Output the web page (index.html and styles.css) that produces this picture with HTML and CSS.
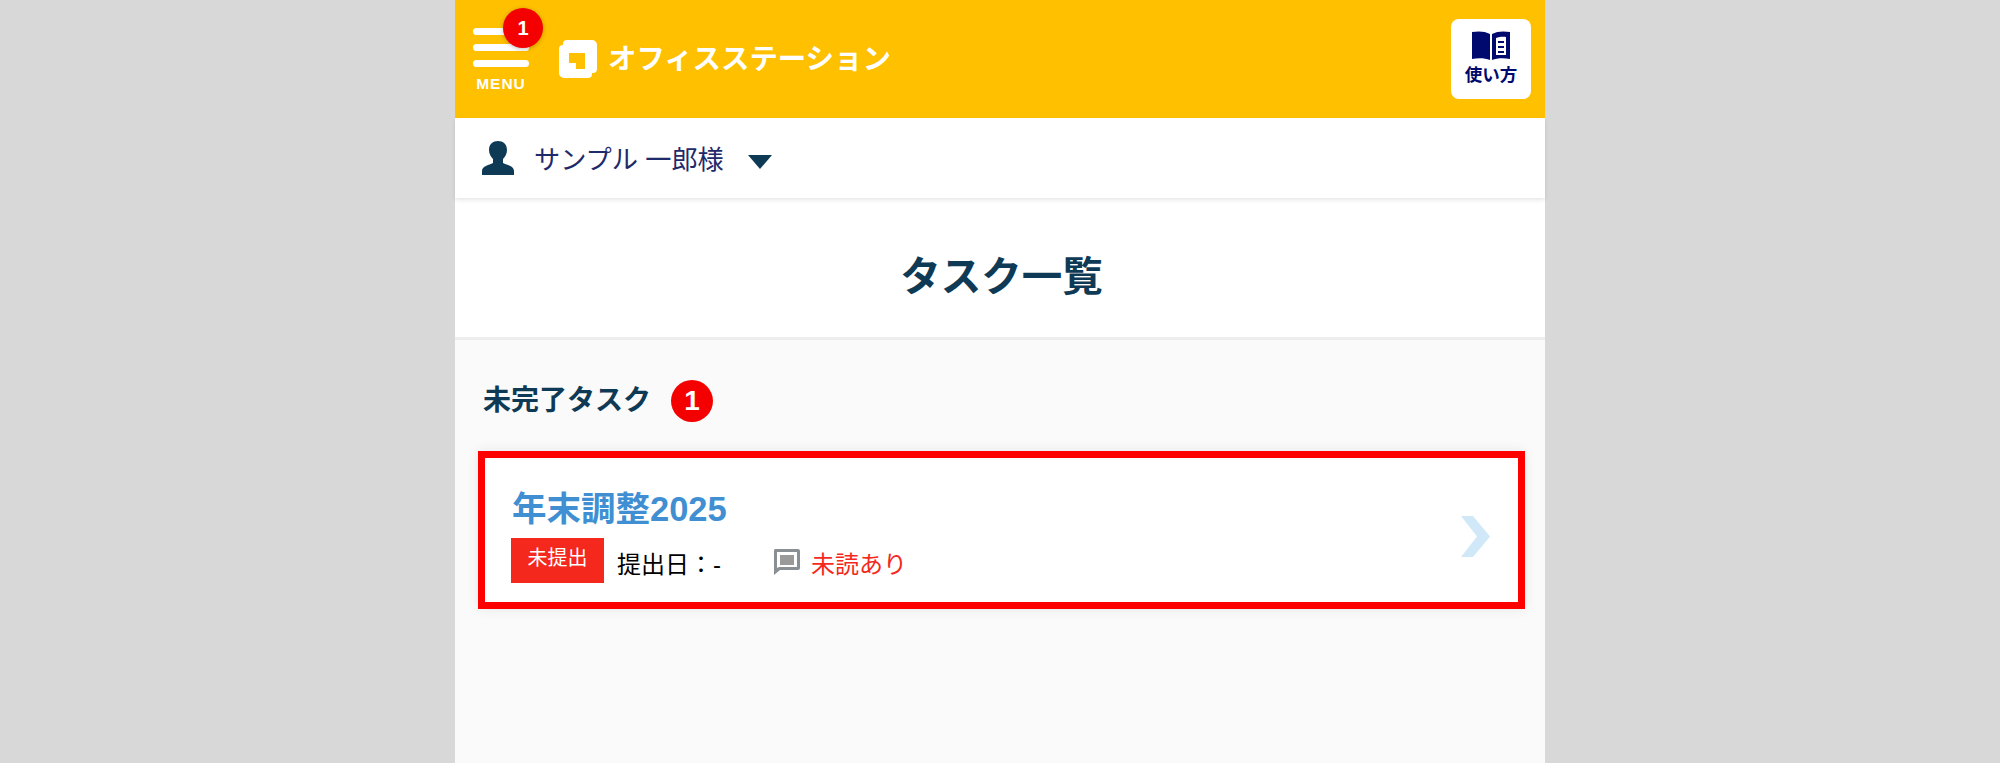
FILE: index.html
```html
<!DOCTYPE html>
<html lang="ja">
    <head>
        <meta charset="utf-8">
        <title>タスク一覧</title>
        <link rel="stylesheet" href="styles.css">
    </head>
    <body>
    <div class="page">
        <header class="top-bar">
            <div class="menu">
                <span class="menu-line"></span>
                <span class="menu-line"></span>
                <span class="menu-line"></span>
                <span class="menu-label">MENU</span>
                <span class="menu-badge">1</span>
            </div>
            <div class="logo">
                <svg class="logo-icon" viewBox="0 0 38 38" width="38" height="38">
                    <path fill="#fff" d="M8 0h25a5 5 0 0 1 5 5v24a4 4 0 0 1-4 4h-1v1a4 4 0 0 1-4 4H5a5 5 0 0 1-5-5V9a4 4 0 0 1 4-4V4a4 4 0 0 1 4-4z"/>
                    <path fill="#ffc000" d="M10 13h16v16h-9v-6h-7z"/>
                    <path fill="#ffc000" d="M0 0h4v3.500H0zM34 34h4v4h-4z"/>
                </svg>
                <span class="logo-text">オフィスステーション</span>
            </div>
            <a class="help-btn">
                <svg class="help-icon" viewBox="0 0 40 30" width="40" height="30">
                    <path fill="#000a6e" d="M1 1c6-1 13-1 18 2v26c-5-2-12-2-18-1z"/>
                    <path fill="#000a6e" fill-rule="evenodd" d="M21 3c5-3 12-3 18-2v27c-6-1-13-1-18 1zM25 7v17h10V6c-3-.5-7 0-10 1z"/>
                    <path fill="#000a6e" d="M27 10h6v2h-6zM27 15h6v2h-6zM27 20h6v2h-6z"/>
                </svg>
                <span>使い方</span>
            </a>
        </header>

        <div class="user-bar">
            <svg class="user-icon" viewBox="0 0 32 34" width="32" height="34">
                <path fill="#0f3a55" d="M16 0c5 0 9 3 9 9 0 4-2 7-4 9v4c4 2 11 3 11 8v4H0v-4c0-5 7-6 11-8v-4c-2-2-4-5-4-9 0-6 4-9 9-9z"/>
            </svg>
            <span class="user-name">サンプル 一郎様</span>
            <span class="user-caret"></span>
        </div>

        <div class="page-title">
            <h1>タスク一覧</h1>
        </div>

        <main class="content">
            <h2 class="section-head">未完了タスク<span class="count">1</span></h2>

            <a class="task-card">
                <div class="task-body">
                    <div class="task-name">年末調整2025</div>
                    <div class="task-meta">
                        <span class="tag">未提出</span>
                        <span class="due">提出日：-</span>
                        <svg class="msg-icon" viewBox="0 0 27 26" width="27" height="26">
                            <path fill="#8a8f94" fill-rule="evenodd" d="M2 0h23a2 2 0 0 1 2 2v17a2 2 0 0 1-2 2H7l-6 5V2a2 2 0 0 1 1-2zM4 3v16l2-1h18V3z"/>
                            <path fill="#9a9a9a" d="M7 6h14v10H7z"/>
                        </svg>
                        <span class="unread">未読あり</span>
                    </div>
                </div>
                <svg class="chevron" viewBox="0 0 29 41" width="29" height="41">
                    <path fill="#d0e8f8" d="M0 0h12l17 20.500-17 20.500H0l16-20.500z"/>
                </svg>
            </a>
        </main>
    </div>
    </body>
</html>
```

FILE: styles.css
```css
body, html {
    height: 100%;
    margin: 0;
    padding: 0;
    font-family: "Liberation Sans", "Noto Sans CJK JP", sans-serif;
}
body {
    background: #d8d8d8;
    overflow: hidden;
}
h1, h2 {
    margin: 0;
}
.page {
    width: 1090px;
    height: 100%;
    margin: 0 auto;
    background: #fafafa;
    display: flex;
    flex-direction: column;
}
.top-bar {
    height: 118px;
    flex: none;
    background: #ffc000;
    display: flex;
    align-items: center;
    padding: 0 14px 0 18px;
}
.menu {
    position: relative;
    width: 56px;
    display: flex;
    flex-direction: column;
    gap: 9px;
}
.menu-line {
    display: block;
    height: 7px;
    background: #fff;
    border-radius: 4px;
}
.menu-label {
    color: #fff;
    font-size: 15.500px;
    font-weight: bold;
    letter-spacing: 1px;
    line-height: 14px;
    text-align: center;
    white-space: nowrap;
    margin-top: 1px;
}
.menu-badge {
    position: absolute;
    left: 30px;
    top: -20px;
    width: 40px;
    height: 40px;
    border-radius: 50%;
    background: #f40000;
    color: #fff;
    font-size: 20px;
    font-weight: bold;
    text-align: center;
    line-height: 40px;
    box-shadow: 0 1px 4px rgba(0, 0, 0, .25);
}
.logo {
    display: flex;
    align-items: center;
    margin-left: 30px;
    gap: 11px;
}
.logo-text {
    color: #fff;
    font-size: 28.400px;
    font-weight: bold;
    line-height: 38px;
}
.help-btn {
    margin-left: auto;
    width: 80px;
    height: 80px;
    background: #fff;
    border-radius: 8px;
    display: flex;
    flex-direction: column;
    align-items: center;
    padding-top: 12px;
    box-sizing: border-box;
    color: #000a6e;
    font-size: 17.500px;
    font-weight: bold;
    line-height: 28px;
}
.user-bar {
    height: 80px;
    flex: none;
    background: #fff;
    box-shadow: 0 2px 4px rgba(0, 0, 0, .1);
    display: flex;
    align-items: center;
    padding-left: 27px;
    position: relative;
}
.user-name {
    margin-left: 20px;
    color: #1f2a6b;
    font-size: 26.200px;
}
.user-caret {
    margin-left: 24px;
    margin-top: 8px;
    border-left: 12px solid transparent;
    border-right: 12px solid transparent;
    border-top: 14px solid #0f3a55;
}
.page-title {
    height: 142px;
    flex: none;
    box-sizing: border-box;
    padding: 12px 0 0 3px;
    background: #fff;
    border-bottom: 3px solid #eee;
    display: flex;
    align-items: center;
    justify-content: center;
}
.page-title h1 {
    color: #0f3a55;
    font-size: 40.500px;
}
.content {
    padding: 40px 20px 0 23px;
}
.section-head {
    display: flex;
    align-items: center;
    padding-left: 5px;
    color: #0f3a55;
    font-size: 28px;
    line-height: 42px;
}
.count {
    width: 42px;
    height: 42px;
    margin-left: 20px;
    border-radius: 50%;
    background: #f40000;
    color: #fff;
    font-size: 28px;
    text-align: center;
}
.task-card {
    margin-top: 29px;
    height: 158px;
    box-sizing: border-box;
    border: 7px solid #f00;
    background: #fff;
    box-shadow: 0 0 12px rgba(0, 0, 0, .08);
    display: flex;
    align-items: center;
    padding: 0 28px 0 26px;
}
.task-body {
    flex: 1;
    padding-top: 10px;
}
.task-name {
    padding-left: 1px;
    color: #3f8fd2;
    font-size: 34.500px;
    font-weight: bold;
    line-height: 42px;
}
.task-meta {
    display: flex;
    align-items: center;
    margin-top: 8px;
    font-size: 24px;
    color: #000;
}
.tag {
    width: 93px;
    height: 45px;
    background: #f5281e;
    color: #fff;
    font-size: 20px;
    text-align: center;
    line-height: 40px;
}
.due {
    margin-left: 13px;
    margin-top: 4px;
    width: 156px;
}
.msg-icon {
    margin-top: 4px;
}
.unread {
    margin-left: 11px;
    margin-top: 4px;
    color: #f5281e;
}
.chevron {
    margin-top: 12px;
}
```
